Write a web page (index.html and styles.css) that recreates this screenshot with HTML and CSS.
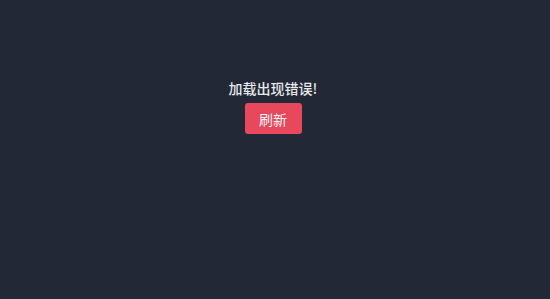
FILE: index.html
```html
<!DOCTYPE html>
<html lang="zh-CN">
<head>
    <meta charset="UTF-8">
    <meta name="viewport" content="width=device-width, initial-scale=1.0">
    <title>加载出现错误</title>
    <link rel="stylesheet" href="styles.css">
</head>
<body>
    <div class="error-box">
        <p class="error-text">加载出现错误!</p>
        <button class="refresh-btn" onclick="location.reload()">刷新</button>
    </div>
</body>
</html>
```

FILE: styles.css
```css
* {
    margin: 0;
    padding: 0;
    box-sizing: border-box;
}

html, body {
    height: 100%;
}

body {
    background: #222836;
    font-family: "Noto Sans CJK SC", "Noto Sans", sans-serif;
}

.error-box {
    display: flex;
    flex-direction: column;
    align-items: center;
    padding-top: 78px;
    padding-right: 4px;
}

.error-text {
    color: #e8e9ec;
    font-size: 14px;
    font-weight: 500;
    line-height: 20px;
    margin-bottom: 5px;
}

.refresh-btn {
    background: #e8485b;
    color: #f4f4f4;
    border: none;
    border-radius: 3px;
    width: 57px;
    height: 31px;
    font-family: inherit;
    font-size: 14px;
    cursor: pointer;
}
```
